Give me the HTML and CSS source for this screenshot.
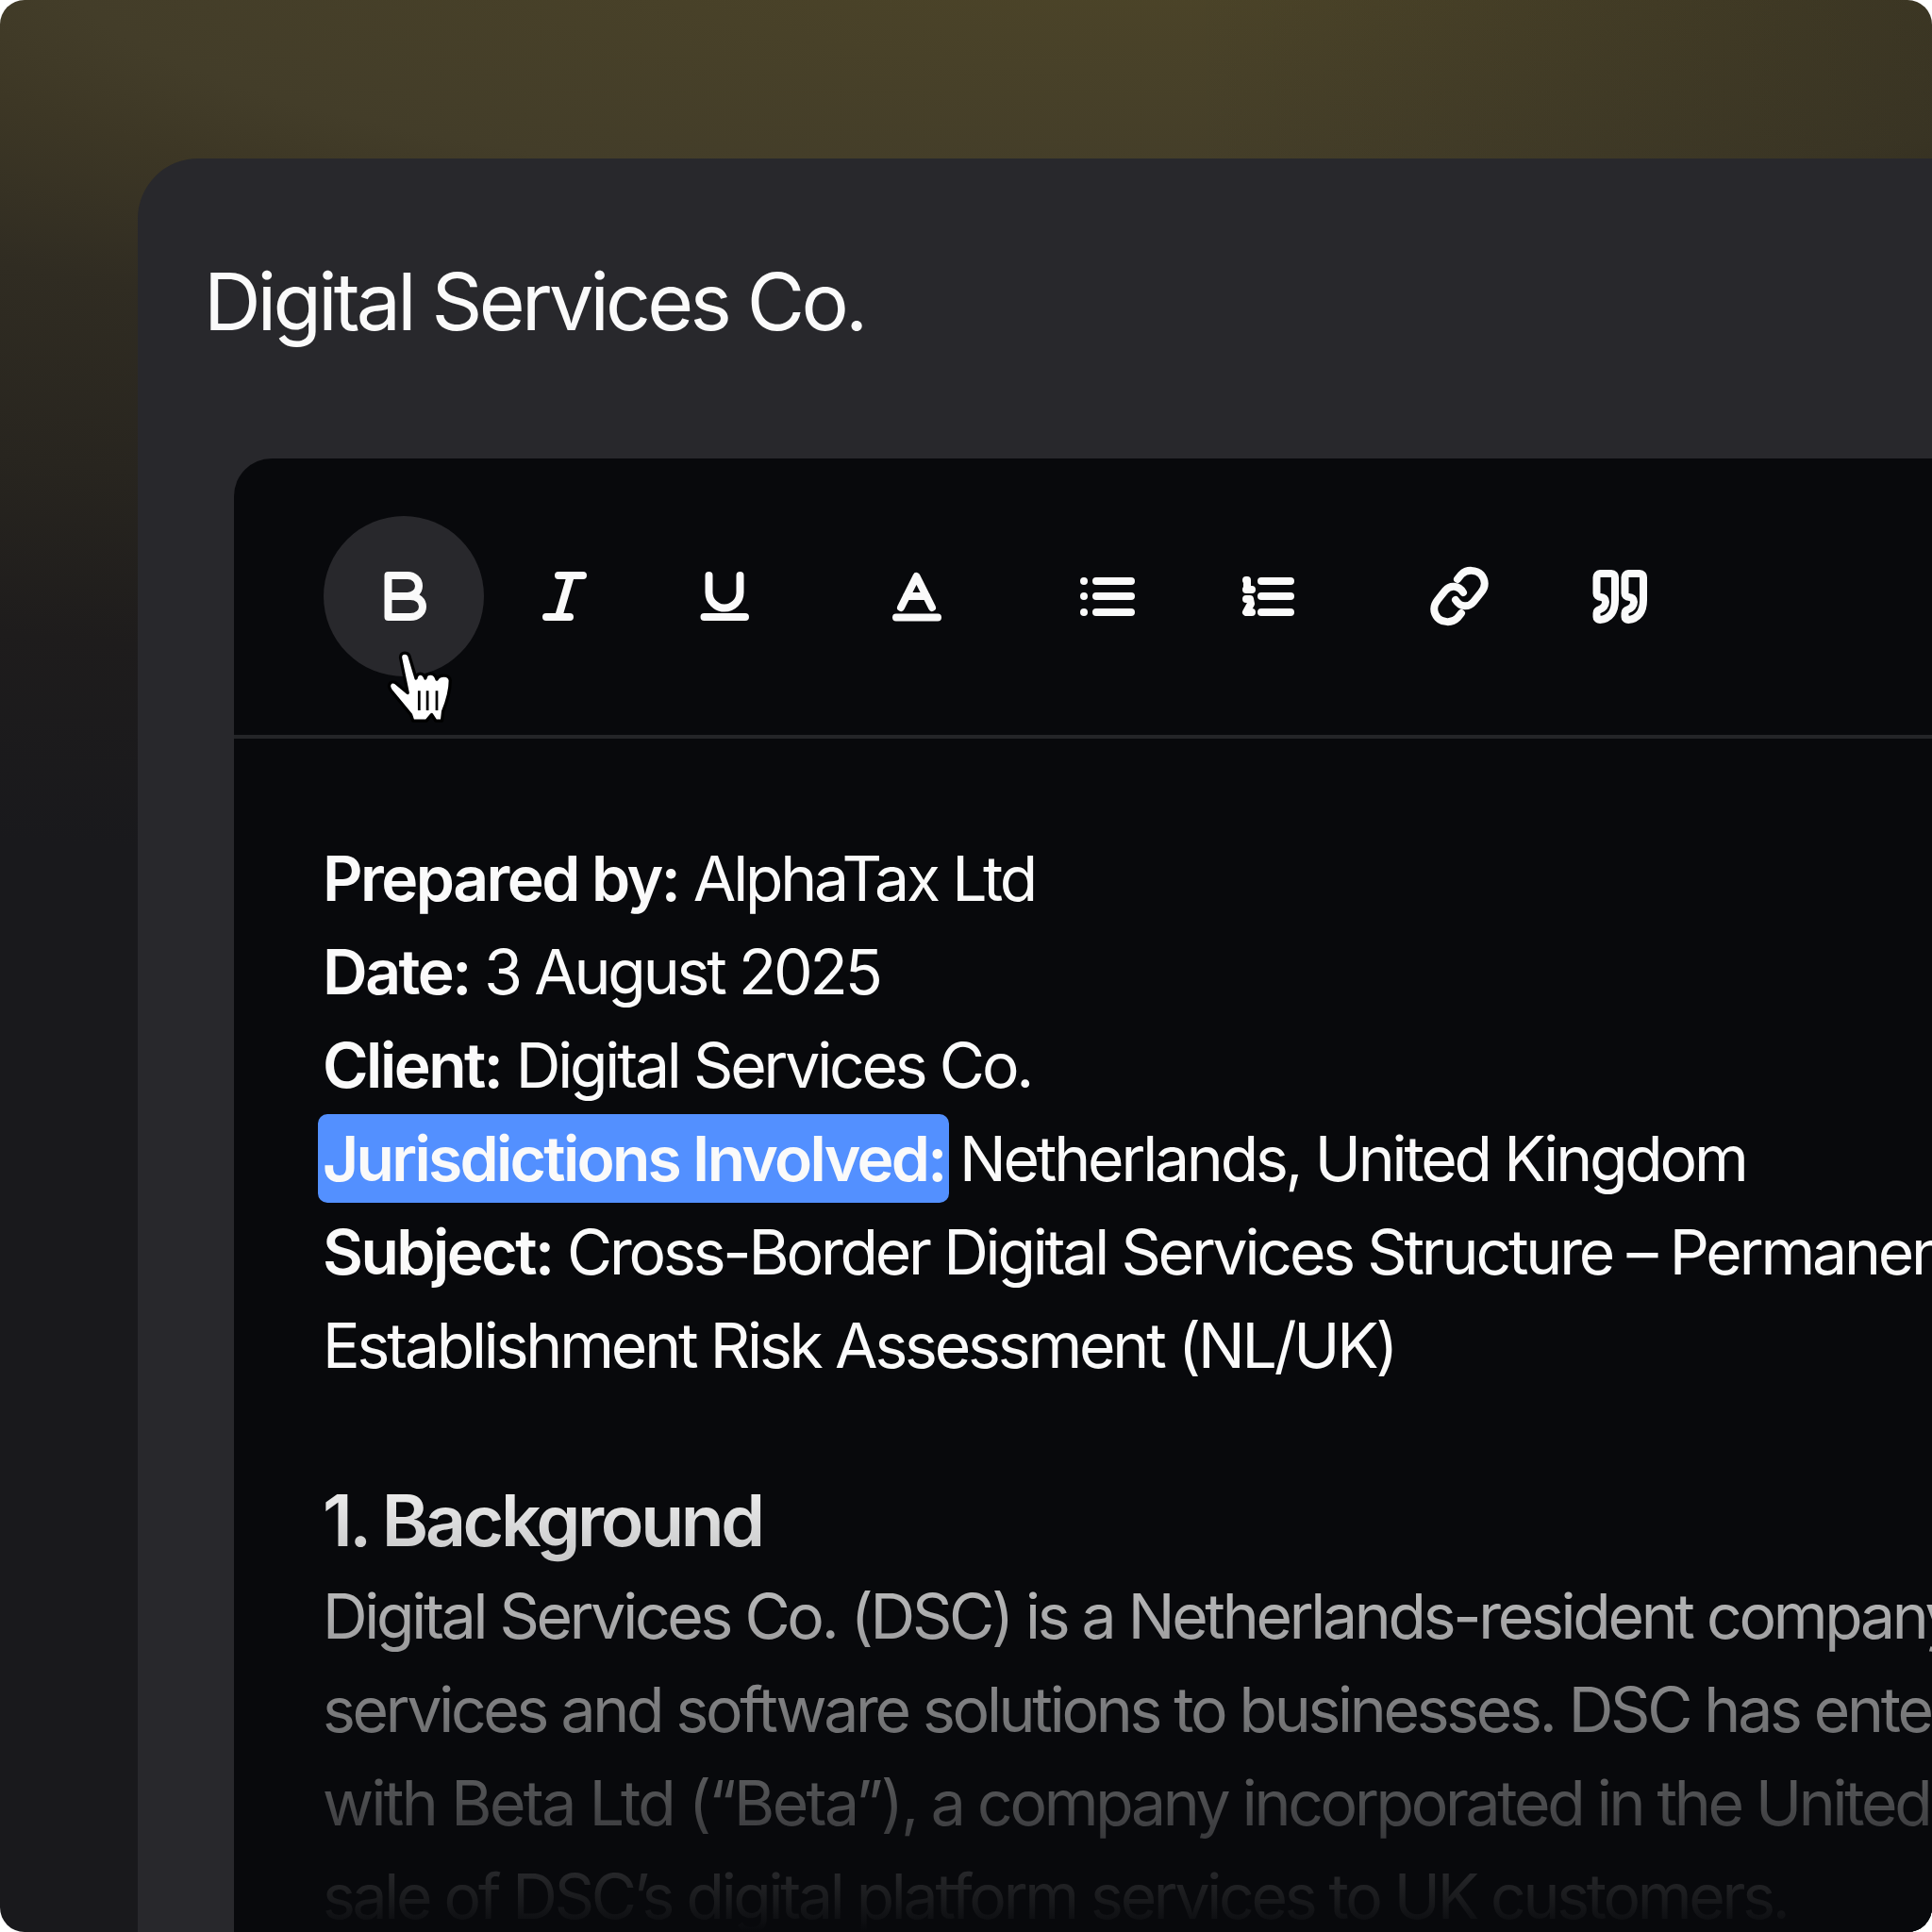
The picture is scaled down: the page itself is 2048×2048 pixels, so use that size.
FILE: index.html
```html
<!DOCTYPE html>
<html lang="en">
<head>
    <meta charset="UTF-8"/>
    <title>Digital Services Co.</title>
    <link rel="stylesheet" href="styles.css">
</head>
<body>

<div class="frame">
    <div class="panel">
        <h1 class="panel_title">Digital Services Co.</h1>

        <div class="editor">
            <div class="toolbar">
                <div class="tool_group">
                    <button class="tool tool_active" aria-label="Bold">
                        <svg class="icon" viewBox="0 0 64 64"><path d="M15.5 10H36C43 10 48 15 48 21C48 27 43 32 36 32H15.5ZM15.5 32H39C47 32 52 37 52 43C52 49 47 54 39 54H15.5Z"/></svg>
                    </button>
                    <button class="tool" aria-label="Italic">
                        <svg class="icon" viewBox="0 0 64 64"><path d="M26 10H52M13 54H38M39 10L26 54"/></svg>
                    </button>
                    <button class="tool" aria-label="Underline">
                        <svg class="icon" viewBox="0 0 64 64"><path d="M15.5 10V28A16.5 16.5 0 0 0 48.5 28V10M10.5 54H54"/></svg>
                    </button>
                </div>
                <div class="tool_group">
                    <button class="tool" aria-label="Text colour">
                        <svg class="icon" viewBox="0 0 64 64"><path d="M16 44L32.5 11L49 44M22 32H43M11 54.5H55"/></svg>
                    </button>
                </div>
                <div class="tool_group">
                    <button class="tool" aria-label="Bullet list">
                        <svg class="icon" viewBox="0 0 64 64"><path d="M20 16H57M20 32H57M20 49H57M7 16H7.01M7 32H7.01M7 49H7.01"/></svg>
                    </button>
                    <button class="tool" aria-label="Numbered list">
                        <svg class="icon" viewBox="0 0 64 64"><path d="M25 16H56M25 32H56M25 49H56"/><path d="M9 15H10V25M9 25H15M9 35H13L14 40L9 49H15"/></svg>
                    </button>
                </div>
                <div class="tool_group">
                    <button class="tool" aria-label="Link">
                        <svg class="icon" viewBox="0 0 64 64"><path d="M30 14L34 9C40 3 50 4 55 9C60 15 60 22 55 28L47 38C42 44 33 44 28 36M34 50L30 55C24 61 14 60 9 55C4 49 4 42 9 36L17 26C22 20 31 20 36 28"/></svg>
                    </button>
                    <button class="tool" aria-label="Quote">
                        <svg class="icon" viewBox="0 0 64 64"><path d="M11 8H23C26 8 27 10 27 12V36C27 48 22 56 11 57C9 57 7.5 56 7.5 54V50C7.5 48 8 47 11 46C14 45 17 42 17 38C17 35 15 33 12 33C9 33 7.5 31 7.5 29V12C7.5 10 9 8 11 8ZM41 8H53C56 8 57 10 57 12V36C57 48 52 56 41 57C39 57 37.5 56 37.5 54V50C37.5 48 38 47 41 46C44 45 47 42 47 38C47 35 45 33 42 33C39 33 37.5 31 37.5 29V12C37.5 10 39 8 41 8Z"/></svg>
                    </button>
                </div>
            </div>

            <div class="document">
                <p class="doc_meta">
                    <b>Prepared by:</b> AlphaTax Ltd<br>
                    <b>Date:</b> 3 August 2025<br>
                    <b>Client:</b> Digital Services Co.<br>
                    <b class="selected">Jurisdictions Involved:</b> Netherlands, United Kingdom<br>
                    <b>Subject:</b> Cross-Border Digital Services Structure – Permanent<br>
                    Establishment Risk Assessment (NL/UK)
                </p>
                <h2 class="doc_heading">1. Background</h2>
                <p class="doc_text">
                    Digital Services Co. (DSC) is a Netherlands-resident company providing<br>
                    services and software solutions to businesses. DSC has entered into an agreement<br>
                    <span class="doc_loose">with Beta Ltd (“Beta”),</span> a company incorporated in the United Kingdom, for the<br>
                    sale of DSC’s digital platform services to UK customers.
                </p>
            </div>

            <!-- hand cursor over the bold button -->
            <svg class="hand_cursor" viewBox="0 0 120 120">
                <path class="hand_shape" d="M35 30C35 24 43 24 44 30L50 50C51 44 57 44 59 50C60 44 68 44 70 51C73 46 82 46 83 52C83 62 80 72 76 82L75 91H69L65 85L60 91H47L45 85L26 62C22 57 25 52 30 54L42 64Z"/>
                <path class="hand_lines" d="M53 62V81M61 62V81M70 62V81"/>
            </svg>
        </div>
    </div>
</div>

</body>
</html>
```

FILE: styles.css
```css
* {
    box-sizing: border-box;
}

body {
    margin: 0;
    background: #fff;
    font-family: 'Inter', 'Liberation Sans', sans-serif;
}

.frame {
    width: 2048px;
    height: 2048px;
    padding: 168px 0 0 146px;
    overflow: hidden;
    border-radius: 26px;
    background:
        linear-gradient(to left, rgba(10, 10, 10, 0.18), rgba(10, 10, 10, 0) 800px),
        radial-gradient(ellipse 4000px 900px at 1250px -60px, #4d4528 0%, #433d29 30%, #3d3725 36%, #302c22 49%, #28251f 68%, #1e1c1c 87%, #19191c 110%);
}

.panel {
    width: 2100px;
    height: 2000px;
    padding: 110px 0 0 70px;
    border-radius: 64px 0 0 0;
    background: #28282c;
}

.panel_title {
    margin: 0 0 124px 0;
    font-size: 84px;
    line-height: 84px;
    font-weight: 400;
    letter-spacing: -0.045em;
    color: #fafafa;
}

.editor {
    position: relative;
    height: 1700px;
    margin-left: 32px;
    border-radius: 40px 0 0 0;
    background: #08090c;
    color: #fafafa;
}

/* fade out of the text at the bottom */
.editor::after {
    content: "";
    position: absolute;
    left: 0;
    right: 0;
    top: 1064px;
    height: 498px;
    background: linear-gradient(to bottom, rgba(8, 9, 12, 0), rgba(8, 9, 12, 1));
}

.toolbar {
    display: flex;
    gap: 33px;
    height: 297px;
    padding: 61px 0 0 95px;
    border-bottom: 4px solid #242528;
}

.tool_group {
    display: flex;
}

.tool {
    display: flex;
    justify-content: center;
    align-items: center;
    width: 170px;
    height: 170px;
    padding: 0;
    border: none;
    border-radius: 50%;
    background: none;
}

.tool_active {
    background: #28282c;
}

.icon {
    width: 64px;
    height: 64px;
    fill: none;
    stroke: #fafafa;
    stroke-width: 8;
    stroke-linecap: round;
    stroke-linejoin: round;
}

.hand_cursor {
    position: absolute;
    left: 138px;
    top: 178px;
    width: 132px;
    height: 132px;
}

.hand_shape {
    fill: #fff;
    stroke: #000;
    stroke-width: 3;
    stroke-linejoin: round;
}

.hand_lines {
    fill: none;
    stroke: #000;
    stroke-width: 2.5;
}

.document {
    padding: 99px 0 0 94px;
    white-space: nowrap;
    font-size: 66px;
    line-height: 99px;
    letter-spacing: -0.048em;
}

.document p {
    margin: 0;
}

.document b {
    font-weight: 600;
    letter-spacing: -0.038em;
}

.document .selected {
    margin: 0 -4px 0 -5px;
    padding: 7px 4px 7px 5px;
    border-radius: 10px;
    background: #5390ff;
    letter-spacing: -0.041em;
}

.doc_heading {
    margin: 86px 0 3px 0;
    font-size: 75px;
    line-height: 99px;
    font-weight: 600;
    letter-spacing: -0.045em;
}

.document .doc_text {
    letter-spacing: -0.0495em;
}

.doc_loose {
    letter-spacing: -0.039em;
}
```
